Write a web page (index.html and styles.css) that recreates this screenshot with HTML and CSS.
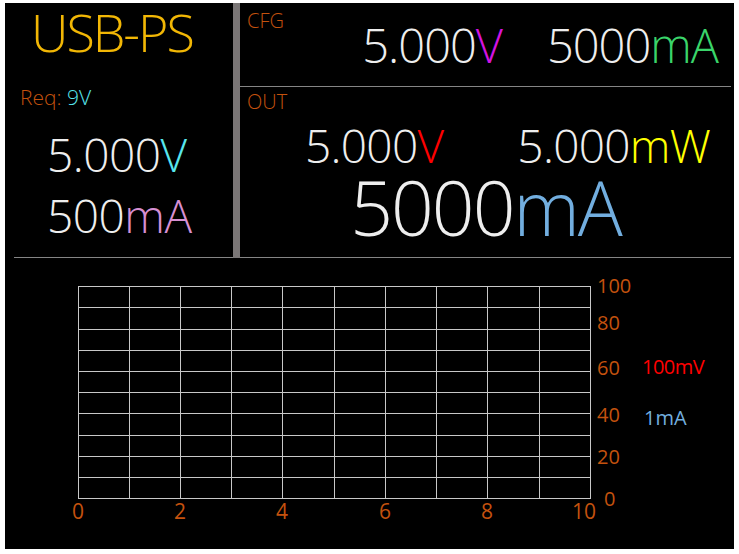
FILE: index.html
```html
<!doctype html>
<html>

<head>
  <title>USB-PS</title>
  <meta http-equiv="Content-Type" content="text/html; charset=UTF-8">
  <link rel="stylesheet" href="styles.css">
</head>

<body>
  <div class="screen">
    <div class="top">
      <section class="source">
        <div class="title">USB-PS</div>
        <div class="req">Req: <span class="cyan">9V</span></div>
        <div class="src-val volts">5.000<span class="cyan">V</span></div>
        <div class="src-val amps">500<span class="pink">mA</span></div>
      </section>
      <div class="split"></div>
      <section class="meters">
        <div class="cfg">
          <div class="tag">CFG</div>
          <div class="cfg-row">
            <span>5.000<span class="magenta">V</span></span>
            <span>5000<span class="green">mA</span></span>
          </div>
        </div>
        <div class="out">
          <div class="tag">OUT</div>
          <div class="out-row">
            <span>5.000<span class="red">V</span></span>
            <span>5.000<span class="yellow">mW</span></span>
          </div>
          <div class="big">5000<span class="blue">mA</span></div>
        </div>
      </section>
    </div>
    <div class="plot">
      <div class="grid">
        <svg width="513" height="213" viewBox="0 0 513 213">
          <path class="lines" d="M0.5 0V213M51.5 0V213M102.5 0V213M153.5 0V213M204.5 0V213M256.5 0V213M307.5 0V213M358.5 0V213M409.5 0V213M461.5 0V213M512.5 0V213
            M0 0.5H513M0 21.5H513M0 43.5H513M0 64.5H513M0 85.5H513M0 106.5H513M0 127.5H513M0 149.5H513M0 170.5H513M0 191.5H513M0 212.5H513" />
        </svg>
        <span class="xl" style="left: 0px">0</span>
        <span class="xl" style="left: 102px">2</span>
        <span class="xl" style="left: 204px">4</span>
        <span class="xl" style="left: 307px">6</span>
        <span class="xl" style="left: 409px">8</span>
        <span class="xl" style="left: 506px">10</span>
        <span class="yl" style="top: -10px">100</span>
        <span class="yl" style="top: 27px">80</span>
        <span class="yl" style="top: 72px">60</span>
        <span class="yl" style="top: 119px">40</span>
        <span class="yl" style="top: 161px">20</span>
        <span class="yl zero" style="top: 203px">0</span>
        <span class="legend red mv">100mV</span>
        <span class="legend blue ma">1mA</span>
      </div>
    </div>
  </div>
</body>

</html>
```

FILE: styles.css
```css
html,
body {
  background-color: white;
  margin: 0;
  font-family: 'Open Sans', 'Noto Sans', sans-serif;
  font-weight: 300;
  color: #eeeeee;
}

.screen {
  margin: 3px 5px;
  width: 729px;
  height: 546px;
  background-color: black;
  display: flex;
  flex-direction: column;
}

.top {
  display: flex;
  height: 255px;
}

/* left column: source info */
.source {
  width: 219px;
  margin-left: 9px;
  border-bottom: 1px solid #858585;
  display: flex;
  flex-direction: column;
  line-height: 1;
}

.title {
  margin: 3px 0 0 17px;
  font-size: 52px;
  letter-spacing: -2px;
  color: #f2b705;
}

.req {
  margin: 29px 0 0 6px;
  font-size: 21px;
  color: #c4520e;
}

.src-val {
  font-size: 46px;
  letter-spacing: -0.5px;
  margin-left: 33px;
}

.volts {
  margin-top: 23px;
}

.amps {
  margin-top: 15px;
}

.split {
  width: 7px;
  background-color: #7a7676;
}

/* right column: configured and output values */
.meters {
  flex: 1;
  margin-right: 3px;
  display: flex;
  flex-direction: column;
  line-height: 1;
}

.cfg,
.out {
  border-bottom: 1px solid #858585;
}

.cfg {
  height: 83px;
  display: flex;
  align-items: flex-start;
}

.out {
  height: 170px;
  display: flex;
  flex-direction: column;
}

.tag {
  font-size: 20px;
  color: #c4520e;
  margin-left: 7px;
}

.cfg .tag {
  margin-top: 8px;
}

.out .tag {
  margin-top: 5px;
}

.cfg-row {
  margin: 19px 13px 0 auto;
  font-size: 47px;
  letter-spacing: -1px;
  display: flex;
  gap: 45px;
}

.out-row {
  margin: 10px 0 0 65px;
  font-size: 46px;
  letter-spacing: -0.7px;
  display: flex;
  gap: 74px;
}

.big {
  margin-top: 2px;
  font-size: 75px;
  letter-spacing: -2px;
  text-align: center;
}

/* bottom: plot */
.plot {
  flex: 1;
  padding: 28px 0 0 73px;
}

.grid {
  position: relative;
  width: 513px;
  height: 213px;
}

.grid svg {
  display: block;
}

.lines {
  fill: none;
  stroke: #c8c8c8;
  stroke-width: 1;
  shape-rendering: crispEdges;
}

.xl,
.yl,
.legend {
  position: absolute;
  line-height: 1;
  font-size: 20px;
  font-weight: 400;
  color: #c4520e;
}

.xl {
  top: 215px;
  font-size: 21px;
  transform: translateX(-50%);
}

.yl {
  left: 519px;
}

.yl.zero {
  left: 526px;
}

.mv {
  left: 564px;
  top: 71px;
  letter-spacing: -0.5px;
}

.ma {
  left: 566px;
  top: 122px;
}

.cyan {
  color: #58e6ee;
}

.pink {
  color: #d68fd2;
}

.magenta {
  color: #d414e0;
}

.green {
  color: #3ad46a;
}

.red {
  color: #ff0000;
}

.yellow {
  color: #ffff00;
}

.blue {
  color: #72aedf;
}
```
